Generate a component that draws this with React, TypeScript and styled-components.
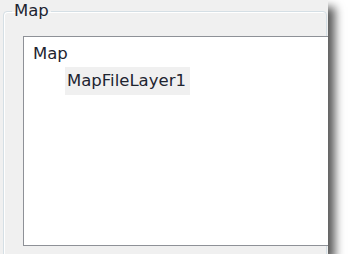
import React from 'react';
import styled, { createGlobalStyle } from 'styled-components';

const GlobalStyle = createGlobalStyle`
  html, body {
    margin: 0;
    padding: 0;
    background: #ffffff;
  }
  body {
    font-family: "DejaVu Sans", Verdana, sans-serif;
  }
`;

const Panel = styled.div`
  width: 328px;
  height: 254px;
  background: #f0f0f0;
  overflow: hidden;
  padding: 1px 0 0 3px;
  box-sizing: border-box;
  box-shadow: 7px 7px 9px rgba(0, 0, 0, 0.65);
`;

const GroupBox = styled.fieldset`
  margin: 0;
  padding: 0;
  width: 324px;
  height: 290px;
  box-sizing: border-box;
  border: 1px solid #d5dfe5;
  border-radius: 4px;
  box-shadow: inset 1px 1px 0 #ffffff;
  min-inline-size: 0;
`;

const Legend = styled.legend`
  margin-left: 8px;
  padding: 0 2px;
  font-size: 16.5px;
  line-height: 20px;
  color: #1e2430;
`;

const TreeBox = styled.div`
  margin: 15px 0 0 19px;
  width: 330px;
  height: 210px;
  box-sizing: border-box;
  background: #ffffff;
  border: 1px solid #8e9197;
  padding: 4px 0 0 9px;
`;

const TreeRow = styled.div<{ $indent: number }>`
  margin-left: ${p => p.$indent}px;
  height: 26px;
  display: flex;
  align-items: flex-start;
`;

const ItemLabel = styled.span<{ $selected?: boolean }>`
  font-size: 16.5px;
  line-height: 26px;
  color: #1e2430;
  white-space: nowrap;
  padding: ${p => (p.$selected ? '1px 4px 1px 2px' : '0')};
  background: ${p => (p.$selected ? '#f0f0f0' : 'transparent')};
`;

const items = [
  { label: 'Map', indent: 0, selected: false },
  { label: 'MapFileLayer1', indent: 32, selected: true },
];

const App: React.FC = () => (
  <>
    <GlobalStyle />
    <Panel>
      <GroupBox>
        <Legend>Map</Legend>
        <TreeBox>
          {items.map(item => (
            <TreeRow key={item.label} $indent={item.indent}>
              <ItemLabel $selected={item.selected}>{item.label}</ItemLabel>
            </TreeRow>
          ))}
        </TreeBox>
      </GroupBox>
    </Panel>
  </>
);

export default App;
